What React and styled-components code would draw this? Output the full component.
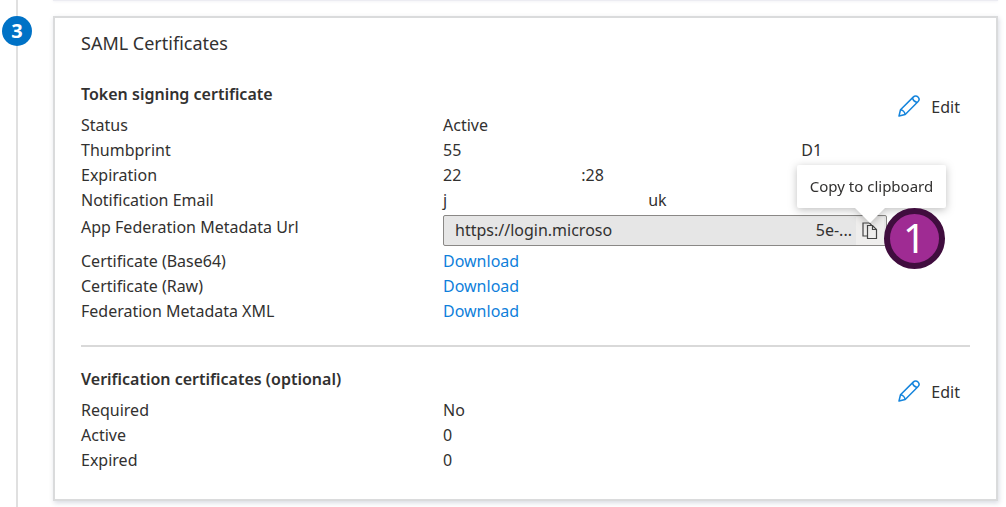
import React from 'react'
import styled, { createGlobalStyle } from 'styled-components'

function App() {
  return (
    <>
      <GlobalStyle />
      <Page>
        <Rail>
          <RailTop />
          <Step>3</Step>
          <RailLine />
        </Rail>
        <Main>
          <PreviousCard />
          <Card>
            <Title>SAML Certificates</Title>

            <Section>
              <Details>
                <Heading>Token signing certificate</Heading>
                <List>
                  <Row><dt>Status</dt><dd>Active</dd></Row>
                  <Row><dt>Thumbprint</dt><dd>55<Hidden $width={340} />D1</dd></Row>
                  <Row><dt>Expiration</dt><dd>22<Hidden $width={120} />:28</dd></Row>
                  <Row><dt>Notification Email</dt><dd>j<Hidden $width={201} />uk</dd></Row>
                  <UrlRow>
                    <dt><label htmlFor="metadata-url">App Federation Metadata Url</label></dt>
                    <dd>
                      <UrlField>
                        <UrlInput id="metadata-url" readOnly defaultValue="https://login.microso" />
                        <UrlEnd>5e-...</UrlEnd>
                        <CopyWrap>
                          <CopyButton type="button" aria-label="Copy to clipboard">
                            <CopyIcon />
                          </CopyButton>
                          <Tooltip role="tooltip">Copy to clipboard</Tooltip>
                          <Callout>1</Callout>
                        </CopyWrap>
                      </UrlField>
                    </dd>
                  </UrlRow>
                  <Row><dt>Certificate (Base64)</dt><dd><Download href="#base64">Download</Download></dd></Row>
                  <Row><dt>Certificate (Raw)</dt><dd><Download href="#raw">Download</Download></dd></Row>
                  <Row><dt>Federation Metadata XML</dt><dd><Download href="#xml">Download</Download></dd></Row>
                </List>
              </Details>
              <EditButton type="button"><PencilIcon />Edit</EditButton>
            </Section>

            <Divider />

            <Section>
              <Details>
                <Heading>Verification certificates (optional)</Heading>
                <List>
                  <Row><dt>Required</dt><dd>No</dd></Row>
                  <Row><dt>Active</dt><dd>0</dd></Row>
                  <Row><dt>Expired</dt><dd>0</dd></Row>
                </List>
              </Details>
              <EditButton type="button"><PencilIcon />Edit</EditButton>
            </Section>
          </Card>
        </Main>
      </Page>
    </>
  )
}

function PencilIcon() {
  return (
    <svg width="22" height="22" viewBox="0 0 22 22" fill="none" stroke="#1484dc" strokeWidth="1.5" strokeLinejoin="round">
      <path d="M1 21 L2.5 14.8 L15.2 2.1 C16.6 0.7 18.7 0.7 20 2 C21.3 3.3 21.3 5.4 19.9 6.8 L7.2 19.5 Z" />
      <path d="M14.4 2.9 C15 5.2 16.8 7 19.1 7.6 M2.5 14.8 C4.6 15 6.8 17.2 7.2 19.5" />
    </svg>
  )
}

function CopyIcon() {
  return (
    <svg width="16" height="18" viewBox="0 0 16 18" fill="none" stroke="#444" strokeWidth="1.2">
      <path d="M5 14 H1 V1 H7.5 L9.5 3" />
      <path d="M5.5 3.5 H10.5 L14.5 7.5 V16.5 H5.5 Z" />
      <path d="M10.5 3.5 V7.5 H14.5" />
    </svg>
  )
}

export default App

const GlobalStyle = createGlobalStyle`
* {
    box-sizing:border-box;
}
body {
    margin:0;
    background:white;
    color:#323130;
    font-family:"Noto Sans", "Open Sans", sans-serif;
    font-size:16px;
    line-height:25px;
}
button, input {
    font:inherit;
    color:inherit;
}
`

const Page = styled.div`
display:flex;
`

const Rail = styled.div`
display:flex;
flex-direction:column;
align-items:center;
flex:none;
width:34px;
`

const RailLine = styled.div`
flex:1;
width:2px;
background:#e0e0e0;
`

const RailTop = styled(RailLine)`
flex:none;
height:16px;
`

const Step = styled.div`
width:30px;
height:30px;
border-radius:50%;
background:#0072c6;
color:white;
font-size:20px;
font-weight:700;
line-height:30px;
text-align:center;
`

const Main = styled.main`
flex:1;
min-width:0;
padding:0 8px 6px 19px;
`

const PreviousCard = styled.div`
height:1px;
margin-bottom:15px;
background:#ececf2;
box-shadow:0 0 3px rgba(60, 60, 120, .15);
`

const Card = styled.section`
padding:13px 26px 26px;
border:2px solid #dadbdc;
background:white;
box-shadow:1px 2px 5px rgba(60, 70, 110, .2);
`

const Title = styled.h2`
margin:0 0 26px;
font-size:18px;
font-weight:400;
line-height:25px;
`

const Section = styled.div`
display:flex;
align-items:flex-start;
`

const Details = styled.div`
flex:1;
min-width:0;
`

const Heading = styled.h3`
margin:0 0 6px;
font-size:16px;
font-weight:600;
line-height:25px;
`

const List = styled.dl`
margin:0;
`

const Row = styled.div`
display:grid;
grid-template-columns:362px 1fr;
dt, dd {
    margin:0;
}
dd {
    display:flex;
    white-space:nowrap;
}
`

const UrlRow = styled(Row)`
padding:2px 0 3px;
dd {
    display:block;
}
`

const Hidden = styled.span`
flex:none;
width:${props => props.$width}px;
`

const UrlField = styled.div`
display:flex;
align-items:center;
max-width:444px;
height:31px;
padding:0 2px 0 11px;
border:1px solid #8a8886;
border-radius:2px;
background:#e6e6e6;
`

const UrlInput = styled.input`
flex:1;
min-width:0;
padding:0;
border:0;
background:transparent;
outline:none;
`

const UrlEnd = styled.span`
margin-right:4px;
`

const CopyWrap = styled.div`
position:relative;
`

const CopyButton = styled.button`
display:flex;
align-items:center;
justify-content:center;
width:28px;
height:28px;
padding:0;
border:0;
background:#efeeed;
cursor:pointer;
`

const Tooltip = styled.div`
position:absolute;
bottom:37px;
left:-59px;
width:149px;
padding:9px 0;
border-radius:2px;
background:white;
font-size:15px;
text-align:center;
white-space:nowrap;
filter:drop-shadow(0 2px 4px rgba(0, 0, 0, .25));
&::after {
    content:"";
    position:absolute;
    top:100%;
    left:58px;
    border:15px solid transparent;
    border-top-color:white;
    border-bottom:0;
}
`

const Callout = styled.div`
position:absolute;
top:-9px;
left:28px;
width:61px;
height:61px;
border:6px solid #400d3e;
border-radius:50%;
background:#9f2b93;
color:white;
font-size:40px;
line-height:48px;
text-align:center;
`

const Download = styled.a`
color:#0f7fdb;
text-decoration:none;
`

const EditButton = styled.button`
display:flex;
align-items:flex-start;
column-gap:11px;
margin:13px 10px 0 0;
padding:0;
border:0;
background:none;
cursor:pointer;
`

const Divider = styled.hr`
height:2px;
margin:21px 0 20px;
border:0;
background:#d9d9d9;
`
